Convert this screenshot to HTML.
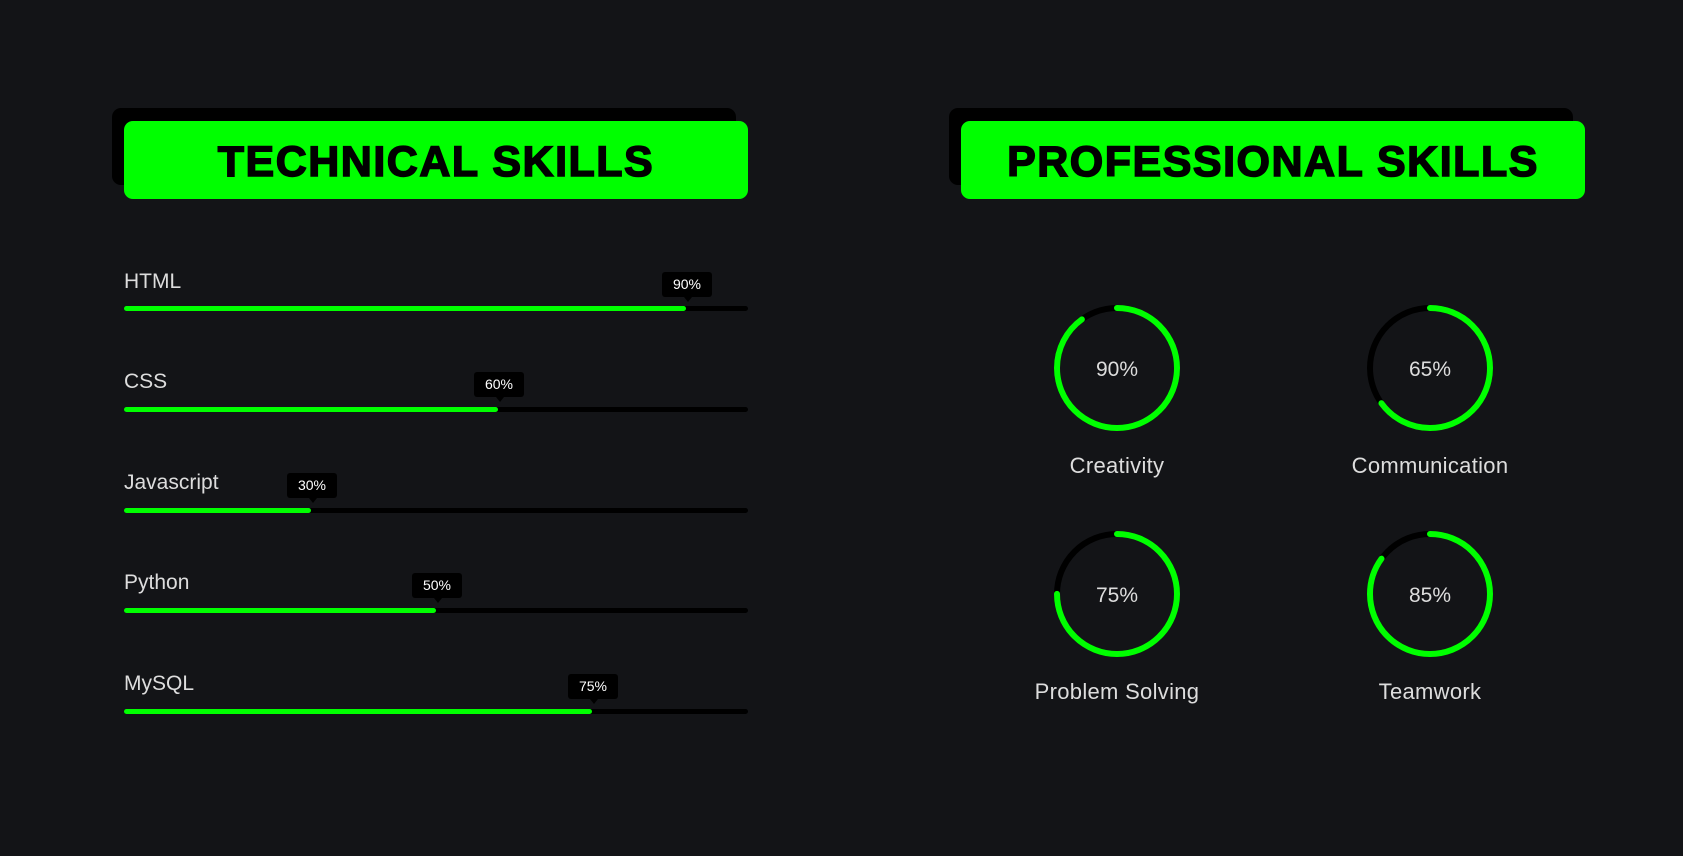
<!DOCTYPE html>
<html><head><meta charset="utf-8"><style>
*{margin:0;padding:0;box-sizing:border-box}
body{width:1683px;height:856px;background:#131417;position:relative;overflow:hidden;font-family:"Liberation Sans",sans-serif;color:#ddd}
.sh{position:absolute;background:#000;border-radius:9px}
.hd{position:absolute;background:#00ff00;border-radius:9px;color:#000;font-weight:900;font-size:43px;text-align:center;line-height:82px;letter-spacing:1.5px;-webkit-text-stroke:1.5px #000}
.lbl{position:absolute;left:124px;font-size:21px;color:#ddd}
.bar{position:absolute;left:124px;width:624px;height:5px;background:#000;border-radius:3px}
.fill{height:5px;background:#00ff00;border-radius:3px}
.tip{position:absolute;width:50px;height:25px;background:#000;color:#fff;font-size:14px;text-align:center;line-height:25px;border-radius:3px}
.tip:after{content:"";position:absolute;left:22px;bottom:-5px;border:4px solid transparent;border-top:5px solid #000;border-bottom:0}
.ct{position:absolute;width:300px;text-align:center;font-size:22px;color:#ddd;letter-spacing:0.3px}
</style></head><body>
<div class="sh" style="left:112px;top:108px;width:624px;height:77px"></div>
<div class="hd" style="left:124px;top:121px;width:624px;height:78px">TECHNICAL SKILLS</div>
<div class="sh" style="left:949px;top:108px;width:624px;height:77px"></div>
<div class="hd" style="left:961px;top:121px;width:624px;height:78px">PROFESSIONAL SKILLS</div>

<div class="lbl" style="top:270px">HTML</div>
<div class="bar" style="top:306px"><div class="fill" style="width:90%"></div></div>
<div class="tip" style="left:662px;top:272px">90%</div>

<div class="lbl" style="top:370px">CSS</div>
<div class="bar" style="top:407px"><div class="fill" style="width:60%"></div></div>
<div class="tip" style="left:474px;top:372px">60%</div>

<div class="lbl" style="top:471px">Javascript</div>
<div class="bar" style="top:508px"><div class="fill" style="width:30%"></div></div>
<div class="tip" style="left:287px;top:473px">30%</div>

<div class="lbl" style="top:571px">Python</div>
<div class="bar" style="top:608px"><div class="fill" style="width:50%"></div></div>
<div class="tip" style="left:412px;top:573px">50%</div>

<div class="lbl" style="top:672px">MySQL</div>
<div class="bar" style="top:709px"><div class="fill" style="width:75%"></div></div>
<div class="tip" style="left:568px;top:674px">75%</div>

<svg width="1683" height="856" style="position:absolute;left:0;top:0">
<g fill="none" stroke-width="6" stroke-linecap="round">
<circle cx="1117" cy="368" r="60" stroke="#000"/>
<circle cx="1117" cy="368" r="60" stroke="#00ff00" stroke-dasharray="339.3 377" transform="rotate(-90 1117 368)"/>
<circle cx="1430" cy="368" r="60" stroke="#000"/>
<circle cx="1430" cy="368" r="60" stroke="#00ff00" stroke-dasharray="245 377" transform="rotate(-90 1430 368)"/>
<circle cx="1117" cy="594" r="60" stroke="#000"/>
<circle cx="1117" cy="594" r="60" stroke="#00ff00" stroke-dasharray="282.7 377" transform="rotate(-90 1117 594)"/>
<circle cx="1430" cy="594" r="60" stroke="#000"/>
<circle cx="1430" cy="594" r="60" stroke="#00ff00" stroke-dasharray="320.4 377" transform="rotate(-90 1430 594)"/>
</g>
<g fill="#ddd" font-family="Liberation Sans,sans-serif" font-size="21" text-anchor="middle">
<text x="1117" y="376">90%</text><text x="1430" y="376">65%</text>
<text x="1117" y="602">75%</text><text x="1430" y="602">85%</text>
</g>
</svg>
<div class="ct" style="left:967px;top:453px">Creativity</div>
<div class="ct" style="left:1280px;top:453px">Communication</div>
<div class="ct" style="left:967px;top:679px">Problem Solving</div>
<div class="ct" style="left:1280px;top:679px">Teamwork</div>
</body></html>
